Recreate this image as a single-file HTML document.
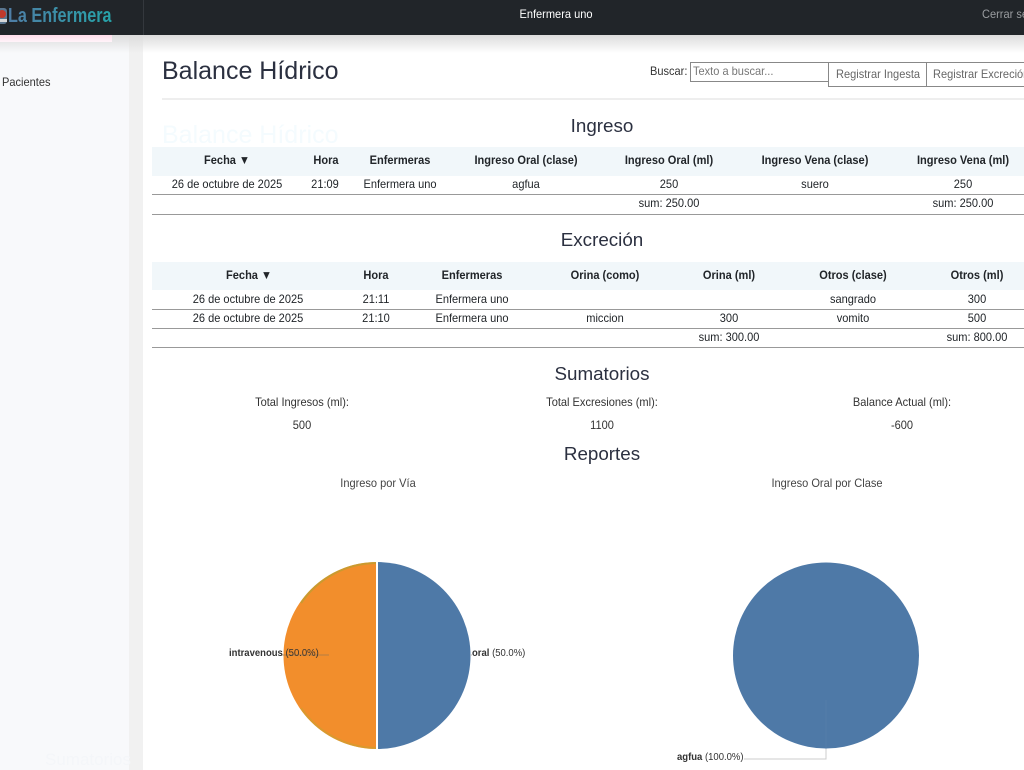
<!DOCTYPE html>
<html lang="es"><head><meta charset="utf-8"><title>Balance Hídrico</title>
<style>
html,body{margin:0;padding:0;width:1024px;height:770px;overflow:hidden;background:#fff;font-family:"Liberation Sans",Arial,sans-serif;color:#212529;font-size:12px}
.a{position:absolute}
.t{position:absolute;line-height:20px;white-space:nowrap;transform-origin:0 50%;transform:scaleX(.92)}
.c{position:absolute;width:300px;text-align:center;line-height:20px;white-space:nowrap;transform:scaleX(.92)}
.b{font-weight:700}
.h{font-size:18.8px;line-height:30px;color:#2b3040;transform:none}
.l{position:absolute;left:152px;width:872px;height:1px;background:#999}
.g{position:absolute;white-space:nowrap;line-height:20px}
</style></head><body>
<div class="a" style="left:0;top:35px;width:129px;height:735px;background:#f8f9fb"></div>
<div class="a" style="left:129px;top:35px;width:14px;height:735px;background:#f1f1f1"></div>
<div class="a" style="left:0;top:35px;width:1024px;height:18px;background:linear-gradient(#dcdcdc,rgba(255,255,255,0))"></div>
<div class="a" style="left:0;top:35px;width:112px;height:7px;background:linear-gradient(#ffdcea,#fff4f9)"></div>
<div class="g" style="left:162px;top:125px;font-size:25px;color:#f4fbfe">Balance Hídrico</div>
<div class="g" style="left:45px;top:750px;font-size:17px;color:#f4f6f9">Sumatorios</div>
<div class="a" style="left:0;top:0;width:1024px;height:35px;background:#212529"></div>
<div class="a" style="left:143px;top:0;width:1px;height:35px;background:#34383d"></div>
<svg class="a" style="left:0;top:6px" width="9" height="20" viewBox="0 0 9 20"><rect x="-4" y="2" width="11" height="16" rx="3" fill="#5a7690"/><circle cx="2" cy="8" r="4" fill="#c1392b"/><rect x="-2" y="13" width="9" height="3" fill="#d7d7d7"/></svg>
<div class="t b" style="left:8px;top:6px;font-size:20px;transform:scaleX(.81);background:linear-gradient(90deg,#4f7da6,#26a3a8);-webkit-background-clip:text;background-clip:text;color:transparent">La Enfermera</div>
<div class="c" style="left:406px;top:4px;color:#fff">Enfermera uno</div>
<div class="t" style="left:982px;top:4px;color:#9a9da0">Cerrar sesión</div>

<div class="t" style="left:2px;top:72px;color:#333">Pacientes</div>

<div class="t" style="left:162px;top:56px;font-size:25px;line-height:30px;color:#2b3040;transform:none">Balance Hídrico</div>
<div class="a" style="left:162px;top:98px;width:862px;height:2px;background:#eee"></div>
<div class="t" style="left:650px;top:61px;color:#333">Buscar:</div>
<div class="a" style="left:690px;top:62px;width:138px;height:18px;border:1px solid #888;background:#fff"></div>
<div class="t" style="left:693px;top:61px;color:#777">Texto a buscar...</div>
<div class="a" style="left:828px;top:62px;width:97px;height:23px;border:1px solid #888;background:#fff"></div>
<div class="a" style="left:927px;top:62px;width:110px;height:23px;border:1px solid #888;border-left:0;background:#fff"></div>
<div class="t" style="left:836px;top:64px;color:#666">Registrar Ingesta</div>
<div class="t" style="left:933px;top:64px;color:#666">Registrar Excreción</div>

<div class="c h" style="left:452px;top:111px">Ingreso</div>
<div class="a" style="left:152px;top:147px;width:872px;height:29px;background:#f1f7fa"></div>
<div class="c b" style="left:77px;top:150px">Fecha ▼</div>
<div class="c b" style="left:176px;top:150px">Hora</div>
<div class="c b" style="left:250px;top:150px">Enfermeras</div>
<div class="c b" style="left:376px;top:150px">Ingreso Oral (clase)</div>
<div class="c b" style="left:519px;top:150px">Ingreso Oral (ml)</div>
<div class="c b" style="left:665px;top:150px">Ingreso Vena (clase)</div>
<div class="c b" style="left:813px;top:150px">Ingreso Vena (ml)</div>
<div class="c" style="left:77px;top:174px">26 de octubre de 2025</div>
<div class="c" style="left:175px;top:174px">21:09</div>
<div class="c" style="left:250px;top:174px">Enfermera uno</div>
<div class="c" style="left:376px;top:174px">agfua</div>
<div class="c" style="left:519px;top:174px">250</div>
<div class="c" style="left:665px;top:174px">suero</div>
<div class="c" style="left:813px;top:174px">250</div>
<div class="l" style="top:194px"></div>
<div class="c" style="left:519px;top:193px">sum: 250.00</div>
<div class="c" style="left:813px;top:193px">sum: 250.00</div>
<div class="l" style="top:214px"></div>

<div class="c h" style="left:452px;top:225px">Excreción</div>
<div class="a" style="left:152px;top:262px;width:872px;height:28px;background:#f1f7fa"></div>
<div class="c b" style="left:99px;top:265px">Fecha ▼</div>
<div class="c b" style="left:226px;top:265px">Hora</div>
<div class="c b" style="left:322px;top:265px">Enfermeras</div>
<div class="c b" style="left:455px;top:265px">Orina (como)</div>
<div class="c b" style="left:579px;top:265px">Orina (ml)</div>
<div class="c b" style="left:703px;top:265px">Otros (clase)</div>
<div class="c b" style="left:827px;top:265px">Otros (ml)</div>
<div class="c" style="left:98px;top:289px">26 de octubre de 2025</div>
<div class="c" style="left:226px;top:289px">21:11</div>
<div class="c" style="left:322px;top:289px">Enfermera uno</div>
<div class="c" style="left:703px;top:289px">sangrado</div>
<div class="c" style="left:827px;top:289px">300</div>
<div class="l" style="top:309px"></div>
<div class="c" style="left:98px;top:308px">26 de octubre de 2025</div>
<div class="c" style="left:226px;top:308px">21:10</div>
<div class="c" style="left:322px;top:308px">Enfermera uno</div>
<div class="c" style="left:455px;top:308px">miccion</div>
<div class="c" style="left:579px;top:308px">300</div>
<div class="c" style="left:703px;top:308px">vomito</div>
<div class="c" style="left:827px;top:308px">500</div>
<div class="l" style="top:328px"></div>
<div class="c" style="left:579px;top:327px">sum: 300.00</div>
<div class="c" style="left:827px;top:327px">sum: 800.00</div>
<div class="l" style="top:347px"></div>

<div class="c h" style="left:452px;top:359px">Sumatorios</div>
<div class="c" style="left:152px;top:392px;color:#333">Total Ingresos (ml):</div>
<div class="c" style="left:452px;top:392px;color:#333">Total Excresiones (ml):</div>
<div class="c" style="left:752px;top:392px;color:#333">Balance Actual (ml):</div>
<div class="c" style="left:152px;top:415px;color:#333">500</div>
<div class="c" style="left:452px;top:415px;color:#333">1100</div>
<div class="c" style="left:752px;top:415px;color:#333">-600</div>
<div class="c h" style="left:452px;top:439px">Reportes</div>
<div class="c" style="left:228px;top:473px;color:#444">Ingreso por Vía</div>
<div class="c" style="left:677px;top:473px;color:#444">Ingreso Oral por Clase</div>

<svg class="a" style="left:0;top:0" width="1024" height="770" viewBox="0 0 1024 770">
<path d="M377 562A93 93 0 0 1 377 749Z" fill="#4e79a7"/>
<path d="M377 562A93 93 0 0 0 377 749Z" fill="#f28e2c"/>
<path d="M376 563A92 92 0 0 0 301 603" fill="none" stroke="#b9a030" stroke-width="2" opacity=".7"/>
<path d="M376 748A92 92 0 0 1 301 708" fill="none" stroke="#c9a030" stroke-width="2" opacity=".6"/>
<path d="M377 561V750" stroke="#fff" stroke-width="2"/>
<path d="M281 655H329" stroke="#9a7a50" stroke-width="1" opacity=".7"/>
<path d="M470 655H472" stroke="#bbb" stroke-width="1"/>
<circle cx="826" cy="655.5" r="93" fill="#4e79a7"/>
<path d="M826 700V749" stroke="#5a82ab" stroke-width="1" opacity=".5"/>
<path d="M826 749V759H744" stroke="#ccc" stroke-width="1" fill="none"/>
</svg>
<div class="t" style="left:229px;top:644px;font-size:10px;color:#333;transform:scaleX(.95)"><b>intravenous</b> (50.0%)</div>
<div class="t" style="left:472px;top:644px;font-size:10px;color:#333;transform:scaleX(.95)"><b>oral</b> (50.0%)</div>
<div class="t" style="left:677px;top:748px;font-size:10px;color:#333;transform:scaleX(.95)"><b>agfua</b> (100.0%)</div>
</body></html>
